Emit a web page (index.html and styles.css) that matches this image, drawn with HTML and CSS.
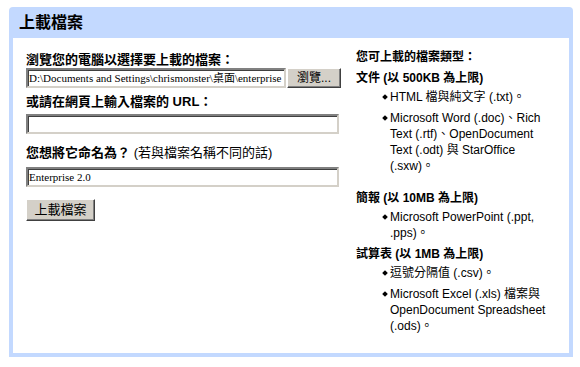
FILE: index.html
```html
<!DOCTYPE html>
<html lang="zh-Hant">
<head>
<meta charset="utf-8">
<link rel="stylesheet" href="styles.css">
</head>
<body>
<div class="box">
  <div class="header">上載檔案</div>
  <div class="content">
    <div class="form">
      <div class="label">瀏覽您的電腦以選擇要上載的檔案：</div>
      <div class="file-row">
        <div class="input file-input">D:\Documents and Settings\chrismonster\桌面\enterprise</div>
        <div class="btn browse">瀏覽...</div>
      </div>
      <div class="label label-url">或請在網頁上輸入檔案的 URL：</div>
      <div class="input url-input"></div>
      <div class="label label-name">您想將它命名為？ <span class="note">(若與檔案名稱不同的話)</span></div>
      <div class="input name-input">Enterprise 2.0</div>
      <div class="btn upload">上載檔案</div>
    </div>
    <div class="types">
      <div class="types-title">您可上載的檔案類型：</div>
      <div class="group group-first">
        <div class="group-title">文件 (以 500KB 為上限)</div>
        <ul>
          <li>HTML 檔與純文字 (.txt)。</li>
          <li>Microsoft Word (.doc)、Rich Text (.rtf)、OpenDocument Text (.odt) 與 StarOffice (.sxw)。</li>
        </ul>
      </div>
      <div class="group">
        <div class="group-title">簡報 (以 10MB 為上限)</div>
        <ul>
          <li>Microsoft PowerPoint (.ppt, .pps)。</li>
        </ul>
      </div>
      <div class="group">
        <div class="group-title">試算表 (以 1MB 為上限)</div>
        <ul>
          <li>逗號分隔值 (.csv)。</li>
          <li>Microsoft Excel (.xls) 檔案與 OpenDocument Spreadsheet (.ods)。</li>
        </ul>
      </div>
    </div>
  </div>
</div>
</body>
</html>
```

FILE: styles.css
```css
html, body {
  margin: 0;
  padding: 0;
  background: #fff;
}
body {
  font-family: "Liberation Sans", Arial, "Noto Sans CJK TC", sans-serif;
  color: #000;
}
.box {
  margin: 7px 0 0 9px;
  width: 564px;
  height: 350px;
  background: #c3d9ff;
  border-radius: 4px 4px 0 0;
  display: flex;
  flex-direction: column;
}
.header {
  height: 31px;
  box-sizing: border-box;
  padding: 7px 0 0 10px;
  font-size: 16px;
  line-height: 18px;
  font-weight: bold;
}
.content {
  flex: 1;
  margin: 0 4px 4px 4px;
  background: #fff;
  display: flex;
  padding: 14px 0 0 13px;
  gap: 15px;
}
.form {
  width: 315px;
  display: flex;
  flex-direction: column;
  align-items: flex-start;
}
.label {
  font-size: 13px;
  line-height: 16px;
  font-weight: bold;
  white-space: nowrap;
}
.note {
  font-weight: normal;
}
.file-row {
  display: flex;
  align-items: flex-start;
  gap: 1px;
}
.input {
  box-sizing: border-box;
  height: 20px;
  border-style: solid;
  border-width: 2px;
  border-color: #808080 #d4d0c8 #d4d0c8 #808080;
  box-shadow: inset 1px 1px 0 #404040;
  background: #fff;
  font-family: "Liberation Serif", "Times New Roman", "Noto Sans CJK TC", serif;
  font-size: 11px;
  line-height: 16px;
  padding: 0 1px;
  white-space: nowrap;
  overflow: hidden;
}
.file-input {
  width: 260px;
}
.url-input {
  width: 313px;
  margin-top: 4px;
}
.name-input {
  width: 313px;
  margin-top: 6px;
}
.label-url {
  margin-top: 6px;
}
.label-name {
  margin-top: 11px;
}
.btn {
  box-sizing: border-box;
  background: #d4d0c8;
  border-style: solid;
  border-width: 1px;
  border-color: #fff #404040 #404040 #fff;
  box-shadow: inset -1px -1px 0 #808080;
  font-size: 12px;
  line-height: 18px;
  text-align: center;
}
.browse {
  width: 54px;
  height: 20px;
}
.upload {
  width: 69px;
  height: 22px;
  line-height: 20px;
  margin-top: 12px;
  font-size: 13px;
}
.types {
  width: 199px;
  font-size: 12px;
  line-height: 16px;
}
.types-title {
  font-weight: bold;
  margin-top: -3px;
}
.group {
  margin-top: 5px;
}
.group-first {
  margin-bottom: 16px;
}
.group-title {
  font-weight: bold;
}
.types ul {
  margin: 3px 0 0 0;
  padding: 0 0 0 34px;
}
.types li {
  margin-bottom: 5px;
  list-style: none;
  position: relative;
}
.types li::before {
  content: "";
  position: absolute;
  left: -7px;
  top: 6px;
  width: 4px;
  height: 4px;
  background: #000;
  transform: rotate(45deg);
}
```
